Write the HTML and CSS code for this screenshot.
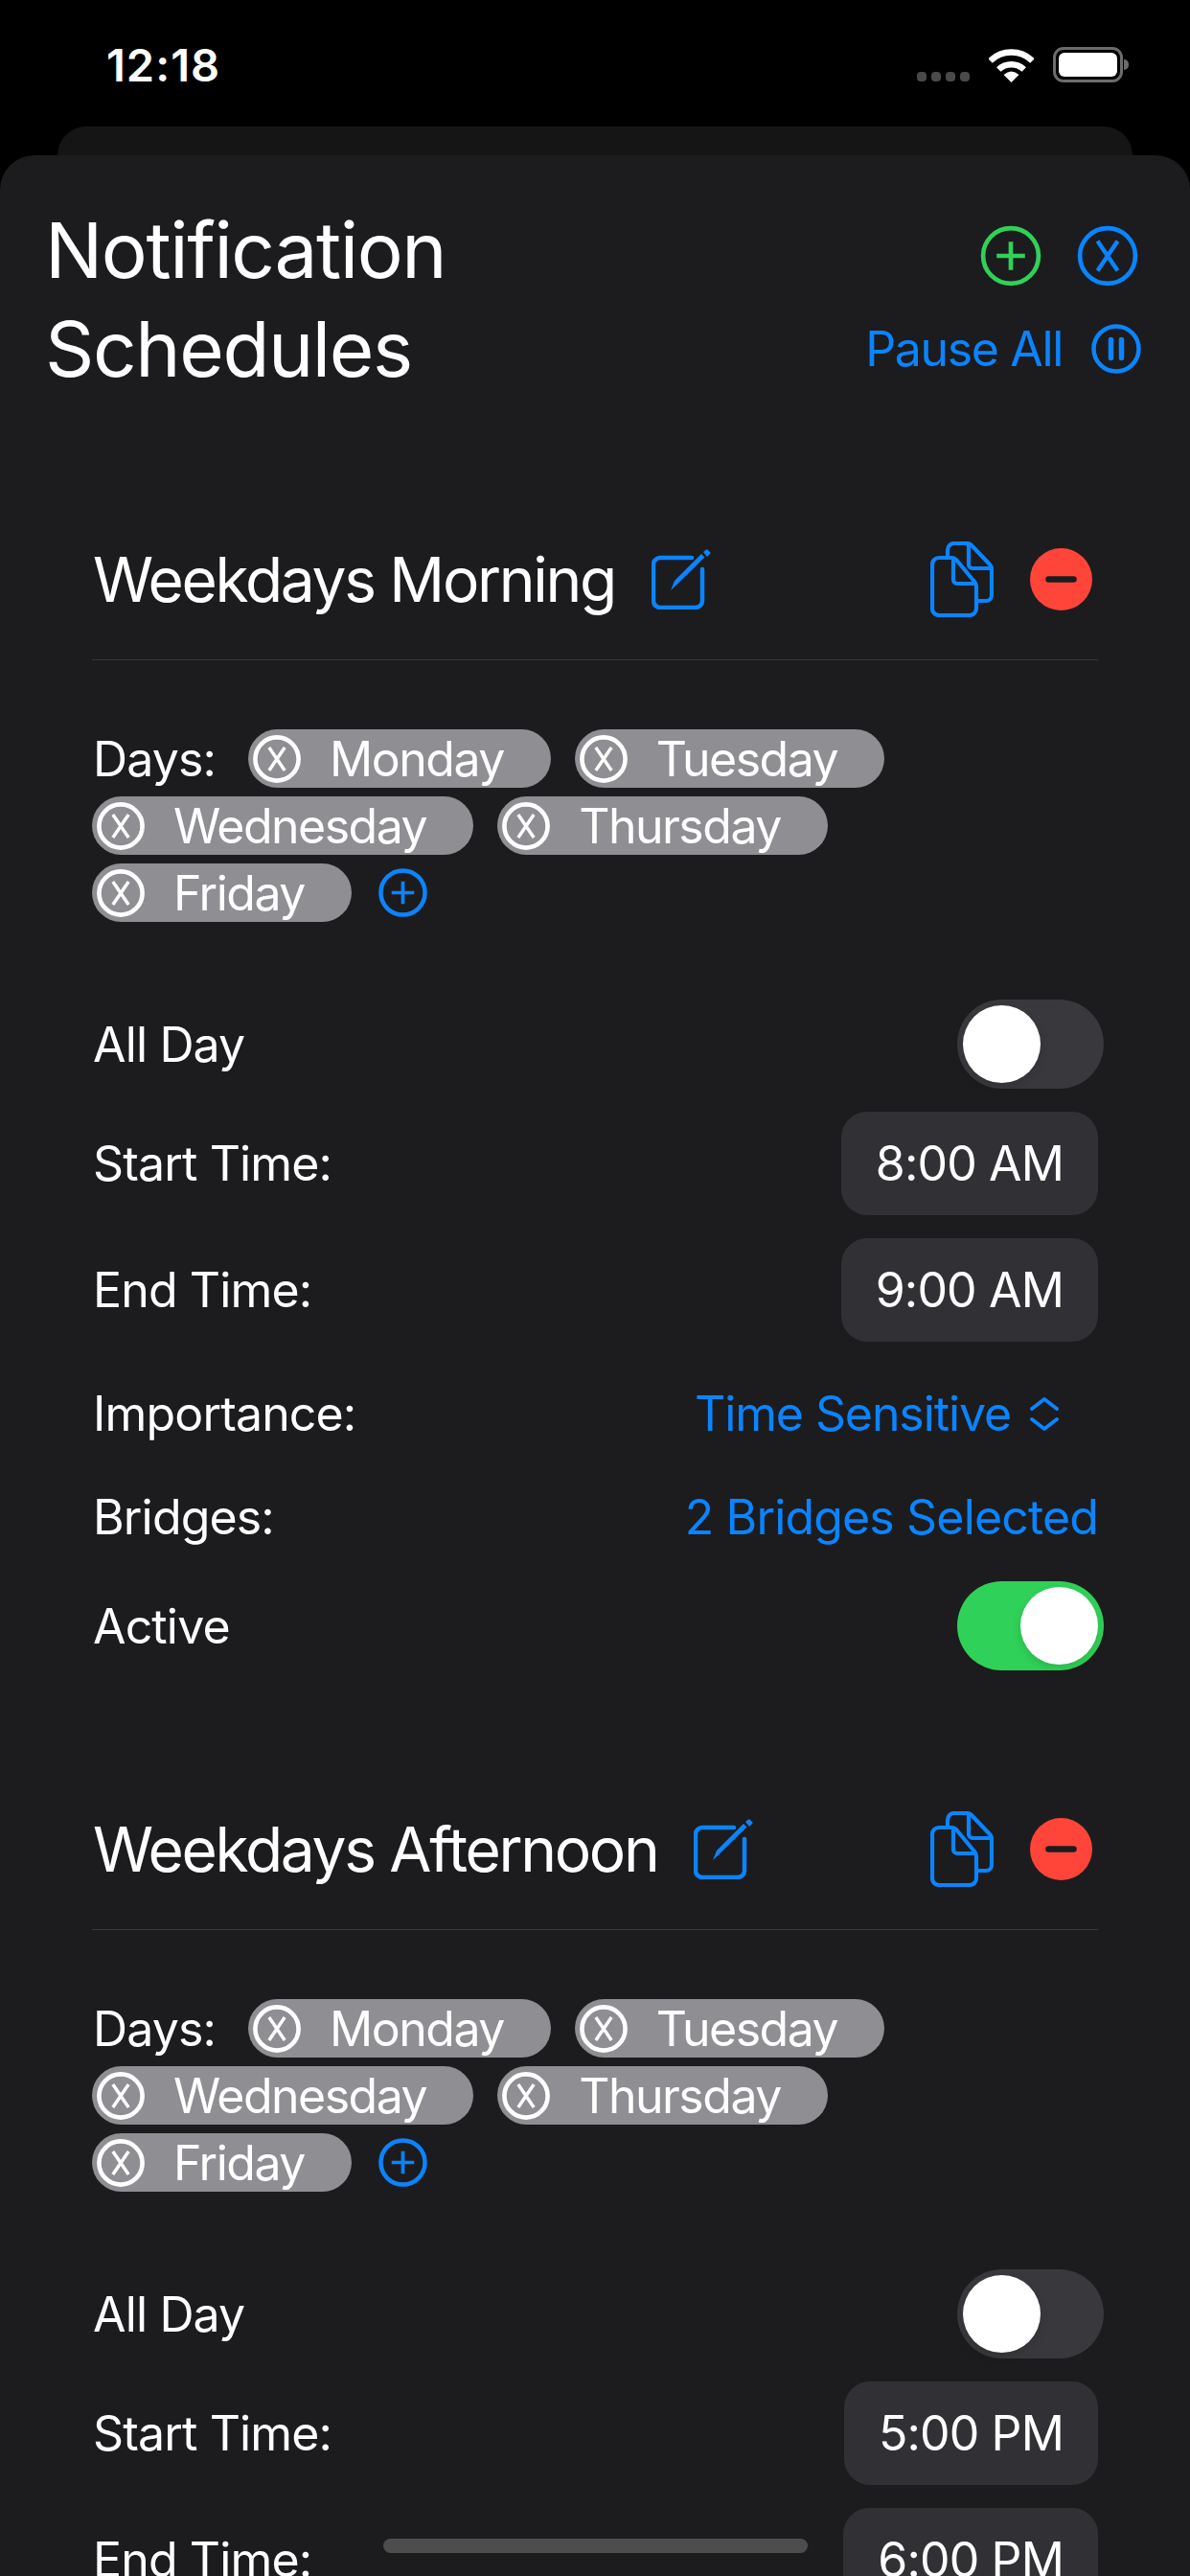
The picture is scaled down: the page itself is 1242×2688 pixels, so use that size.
FILE: index.html
```html
<!DOCTYPE html>
<html lang="en">
<head>
  <meta charset="UTF-8">
  <meta name="viewport" content="width=device-width, initial-scale=1.0">
  <title>Notification Schedules</title>
  <link rel="stylesheet" href="styles.css">
</head>
<body>

  <svg class="icon-defs" aria-hidden="true">
    <symbol id="i-xcircle" viewBox="0 0 52 52">
      <circle cx="26" cy="26" r="23.5" fill="none" stroke="currentColor"/>
      <path d="M17.500 13.500 34.500 38.500M34.500 13.500 17.500 38.500" fill="none" stroke="currentColor" stroke-width="3.600"/>
    </symbol>
    <symbol id="i-plus" viewBox="0 0 52 52">
      <circle cx="26" cy="26" r="23.5" fill="none" stroke="currentColor"/>
      <path d="M26 14V38M14 26H38" fill="none" stroke="currentColor" stroke-width="3.800"/>
    </symbol>
    <symbol id="i-edit" viewBox="0 0 62 64">
      <path d="M42 10H9a7 7 0 0 0-7 7V55a7 7 0 0 0 7 7H46a7 7 0 0 0 7-7V22" fill="none" stroke="currentColor" stroke-width="4.5" stroke-linecap="round"/>
      <path d="M20 44 24 34 52 6 55.500 9.500 27 37.500Z M54 4 57 1.500 58.500 1.500 61.500 4.500 61.500 5.500 58 9Z" fill="currentColor"/>
    </symbol>
    <symbol id="i-copy" viewBox="0 0 66 79">
      <g fill="none" stroke="currentColor" stroke-width="4.200" stroke-linejoin="round">
        <path d="M18 16V9a7 7 0 0 1 7-7H38q3 0 5 2L62 24q2 2 2 5V56a6 6 0 0 1-6 6H49"/>
        <path d="M40 2V24a4 4 0 0 0 4 4H63"/>
        <path d="M23 17H9a7 7 0 0 0-7 7V70a7 7 0 0 0 7 7H41a7 7 0 0 0 7-7V47q0-3-2-5L27 19q-2-2-4-2Z"/>
        <path d="M24 17V40a4 4 0 0 0 4 4H47"/>
      </g>
    </symbol>
    <symbol id="i-minus" viewBox="0 0 65 65">
      <circle cx="32.500" cy="32.500" r="32.500" fill="#ff453a"/>
      <path d="M19.500 32.500H45.500" fill="none" stroke="#1c1c1e" stroke-width="6.500" stroke-linecap="round"/>
    </symbol>
    <symbol id="i-updown" viewBox="0 0 30 35">
      <path d="M2 12 15 2 28 12M2 23 15 33 28 23" fill="none" stroke="currentColor" stroke-width="3.800" stroke-linecap="round" stroke-linejoin="round"/>
    </symbol>
  </svg>

  <div class="status-bar">
    <span class="status-time">12:18</span>
    <div class="status-icons">
      <div class="signal-dots"><i></i><i></i><i></i><i></i></div>
      <svg class="wifi" viewBox="0 0 47 36">
        <path d="M1.500 13.500A31.500 31.500 0 0 1 45.500 13.500M10.300 22.500A19 19 0 0 1 36.700 22.500" fill="none" stroke="#fff" stroke-width="6.500"/>
        <path d="M23.500 36 15.500 28Q23.500 21 31.500 28Z" fill="#fff"/>
      </svg>
      <div class="battery"><div class="battery-level"></div></div>
    </div>
  </div>

  <div class="back-card"></div>

  <main class="sheet">
    <header class="sheet-head">
      <h1 class="sheet-title">Notification<br>Schedules</h1>
      <div class="sheet-actions">
        <div class="action-row">
          <svg class="icon-lg green"><use href="#i-plus"/></svg>
          <svg class="icon-lg blue"><use href="#i-xcircle"/></svg>
        </div>
        <div class="pause-row">
          <span class="pause-label blue">Pause All</span>
          <svg class="pause-icon blue" viewBox="0 0 52 52">
            <circle cx="26" cy="26" r="23.500" fill="none" stroke="currentColor" stroke-width="4.500"/>
            <path d="M20.500 16.500V35.500M31.500 16.500V35.500" fill="none" stroke="currentColor" stroke-width="5.500" stroke-linecap="round"/>
          </svg>
        </div>
      </div>
    </header>

    <section class="schedule">
      <div class="schedule-head">
        <h2 class="schedule-name">Weekdays Morning</h2>
        <svg class="icon-edit blue"><use href="#i-edit"/></svg>
        <svg class="icon-copy blue"><use href="#i-copy"/></svg>
        <svg class="icon-minus"><use href="#i-minus"/></svg>
      </div>
      <div class="days">
        <span class="days-label">Days:</span>
        <span class="pill"><svg class="pill-x"><use href="#i-xcircle"/></svg>Monday</span>
        <span class="pill"><svg class="pill-x"><use href="#i-xcircle"/></svg>Tuesday</span>
        <span class="pill"><svg class="pill-x"><use href="#i-xcircle"/></svg>Wednesday</span>
        <span class="pill"><svg class="pill-x"><use href="#i-xcircle"/></svg>Thursday</span>
        <span class="pill"><svg class="pill-x"><use href="#i-xcircle"/></svg>Friday</span>
        <svg class="days-add blue"><use href="#i-plus"/></svg>
      </div>
      <div class="row row-allday"><span>All Day</span><div class="toggle"><div class="knob"></div></div></div>
      <div class="row row-time"><span>Start Time:</span><span class="time-btn">8:00 AM</span></div>
      <div class="row row-time"><span>End Time:</span><span class="time-btn">9:00 AM</span></div>
      <div class="row row-importance"><span>Importance:</span><span class="picker blue">Time Sensitive<svg class="icon-updown"><use href="#i-updown"/></svg></span></div>
      <div class="row row-bridges"><span>Bridges:</span><span class="blue">2 Bridges Selected</span></div>
      <div class="row row-active"><span>Active</span><div class="toggle on"><div class="knob"></div></div></div>
    </section>

    <section class="schedule">
      <div class="schedule-head">
        <h2 class="schedule-name">Weekdays Afternoon</h2>
        <svg class="icon-edit blue"><use href="#i-edit"/></svg>
        <svg class="icon-copy blue"><use href="#i-copy"/></svg>
        <svg class="icon-minus"><use href="#i-minus"/></svg>
      </div>
      <div class="days">
        <span class="days-label">Days:</span>
        <span class="pill"><svg class="pill-x"><use href="#i-xcircle"/></svg>Monday</span>
        <span class="pill"><svg class="pill-x"><use href="#i-xcircle"/></svg>Tuesday</span>
        <span class="pill"><svg class="pill-x"><use href="#i-xcircle"/></svg>Wednesday</span>
        <span class="pill"><svg class="pill-x"><use href="#i-xcircle"/></svg>Thursday</span>
        <span class="pill"><svg class="pill-x"><use href="#i-xcircle"/></svg>Friday</span>
        <svg class="days-add blue"><use href="#i-plus"/></svg>
      </div>
      <div class="row row-allday"><span>All Day</span><div class="toggle"><div class="knob"></div></div></div>
      <div class="row row-time"><span>Start Time:</span><span class="time-btn">5:00 PM</span></div>
      <div class="row row-time"><span>End Time:</span><span class="time-btn">6:00 PM</span></div>
    </section>
  </main>

  <div class="home-indicator"></div>

</body>
</html>
```

FILE: styles.css
```css
html, body {
  height: 100%;
}

body {
  margin: 0;
  background-color: #000;
  color: #fff;
  font-family: Inter, "Noto Sans", sans-serif;
  font-size: 50px;
  letter-spacing: -0.85px;
  overflow: hidden;
  position: relative;
}

.icon-defs {
  display: none;
}

.blue {
  color: #0a84ff;
}

.green {
  color: #30d158;
}

/* status bar */
.status-bar {
  height: 132px;
  box-sizing: border-box;
  padding: 49px 70px 0 111px;
  display: flex;
  justify-content: space-between;
  align-items: flex-start;
}

.status-time {
  font-size: 47px;
  font-weight: 600;
  line-height: 37px;
  letter-spacing: 1px;
}

.status-icons {
  display: flex;
  align-items: flex-end;
}

.signal-dots {
  display: flex;
  gap: 5px;
  margin-right: 20px;
  padding-bottom: 1px;
}

.signal-dots i {
  width: 10px;
  height: 10px;
  border-radius: 4px;
  background-color: #4a4a4a;
}

.wifi {
  width: 47px;
  height: 36px;
  margin-right: 20px;
}

.battery {
  width: 73px;
  height: 37px;
  box-sizing: border-box;
  border: 3px solid #6c6c6c;
  border-radius: 11px;
  padding: 3px;
  position: relative;
}

.battery::after {
  content: "";
  position: absolute;
  left: 71px;
  top: 10px;
  width: 5px;
  height: 11px;
  border-radius: 0 5px 5px 0;
  background-color: #6c6c6c;
}

.battery-level {
  height: 100%;
  border-radius: 6px;
  background-color: #fff;
}

/* sheets */
.back-card {
  height: 30px;
  margin: 0 60px;
  border-radius: 30px 30px 0 0;
  background-color: #151516;
}

.sheet {
  height: 2526px;
  box-sizing: border-box;
  padding: 47px 48px 0 47px;
  border-radius: 36px 36px 0 0;
  background-color: #1c1c1e;
  overflow: hidden;
}

.sheet-head {
  display: flex;
  justify-content: space-between;
}

.sheet-title {
  margin: 0;
  font-size: 80px;
  font-weight: 400;
  line-height: 103px;
  letter-spacing: -1.4px;
}

.sheet-actions {
  margin-right: 3px;
  padding-top: 26px;
  display: flex;
  flex-direction: column;
  align-items: flex-end;
}

.action-row {
  display: flex;
  gap: 37px;
  margin-right: 3px;
}

.icon-lg {
  width: 64px;
  height: 64px;
  stroke-width: 3.8px;
}

.pause-row {
  margin-top: 35px;
  height: 60px;
  display: flex;
  align-items: center;
  gap: 30px;
}

.pause-label {
  letter-spacing: -1.35px;
}

.pause-icon {
  width: 52px;
  height: 52px;
}

/* schedule card */
.schedule {
  margin: 139px 48px 0 49px;
}

.schedule + .schedule {
  margin-top: 136px;
}

.schedule-head {
  height: 100px;
  padding-bottom: 34px;
  border-bottom: 1px solid #38383a;
  display: flex;
  align-items: center;
}

.schedule-name {
  margin: 0 38px 0 1px;
  font-size: 64px;
  font-weight: 400;
  letter-spacing: -2.3px;
}

.icon-edit {
  width: 62px;
  height: 64px;
  margin-right: auto;
}

.icon-copy {
  width: 66px;
  height: 79px;
  margin-right: 38px;
}

.icon-minus {
  width: 65px;
  height: 65px;
  margin-right: 6px;
}

/* day pills */
.days {
  margin-top: 72px;
  display: flex;
  flex-wrap: wrap;
  align-items: center;
  gap: 9px 25px;
}

.days-label {
  margin: 0 9px 0 1px;
}

.pill {
  height: 61px;
  padding: 0 49px 0 5px;
  border-radius: 31px;
  background-color: #8e8e93;
  letter-spacing: -1.5px;
  display: flex;
  align-items: center;
  gap: 30px;
}

.pill-x {
  width: 50px;
  height: 50px;
  stroke-width: 4.800px;
}

.days-add {
  width: 51px;
  height: 51px;
  margin-left: 3px;
  stroke-width: 4.600px;
}

/* rows */
.row {
  padding-left: 1px;
  display: flex;
  justify-content: space-between;
  align-items: center;
}

.row-allday {
  margin-top: 81px;
}

.row-time {
  margin-top: 24px;
}

.row-importance {
  margin-top: 44px;
  height: 62px;
}

.row-bridges {
  margin-top: 46px;
  height: 62px;
}

.row-active {
  margin-top: 36px;
}

.time-btn {
  height: 108px;
  padding: 0 36px;
  border-radius: 27px;
  background-color: #313135;
  display: flex;
  align-items: center;
}

.picker {
  display: flex;
  align-items: center;
  gap: 20px;
  margin-right: 41px;
  letter-spacing: -1.1px;
}

.icon-updown {
  width: 30px;
  height: 35px;
}

.toggle {
  width: 153px;
  height: 93px;
  margin-right: -6px;
  box-sizing: border-box;
  padding: 6px;
  border-radius: 47px;
  background-color: #39393d;
  display: flex;
}

.toggle.on {
  background-color: #30d158;
  justify-content: flex-end;
}

.knob {
  width: 81px;
  height: 81px;
  border-radius: 50%;
  background-color: #fff;
  box-shadow: 0 4px 10px rgba(0, 0, 0, 0.12);
}

.home-indicator {
  position: absolute;
  left: 400px;
  bottom: 24px;
  width: 443px;
  height: 15px;
  border-radius: 8px;
  background-color: #4d4d4d;
}
```
